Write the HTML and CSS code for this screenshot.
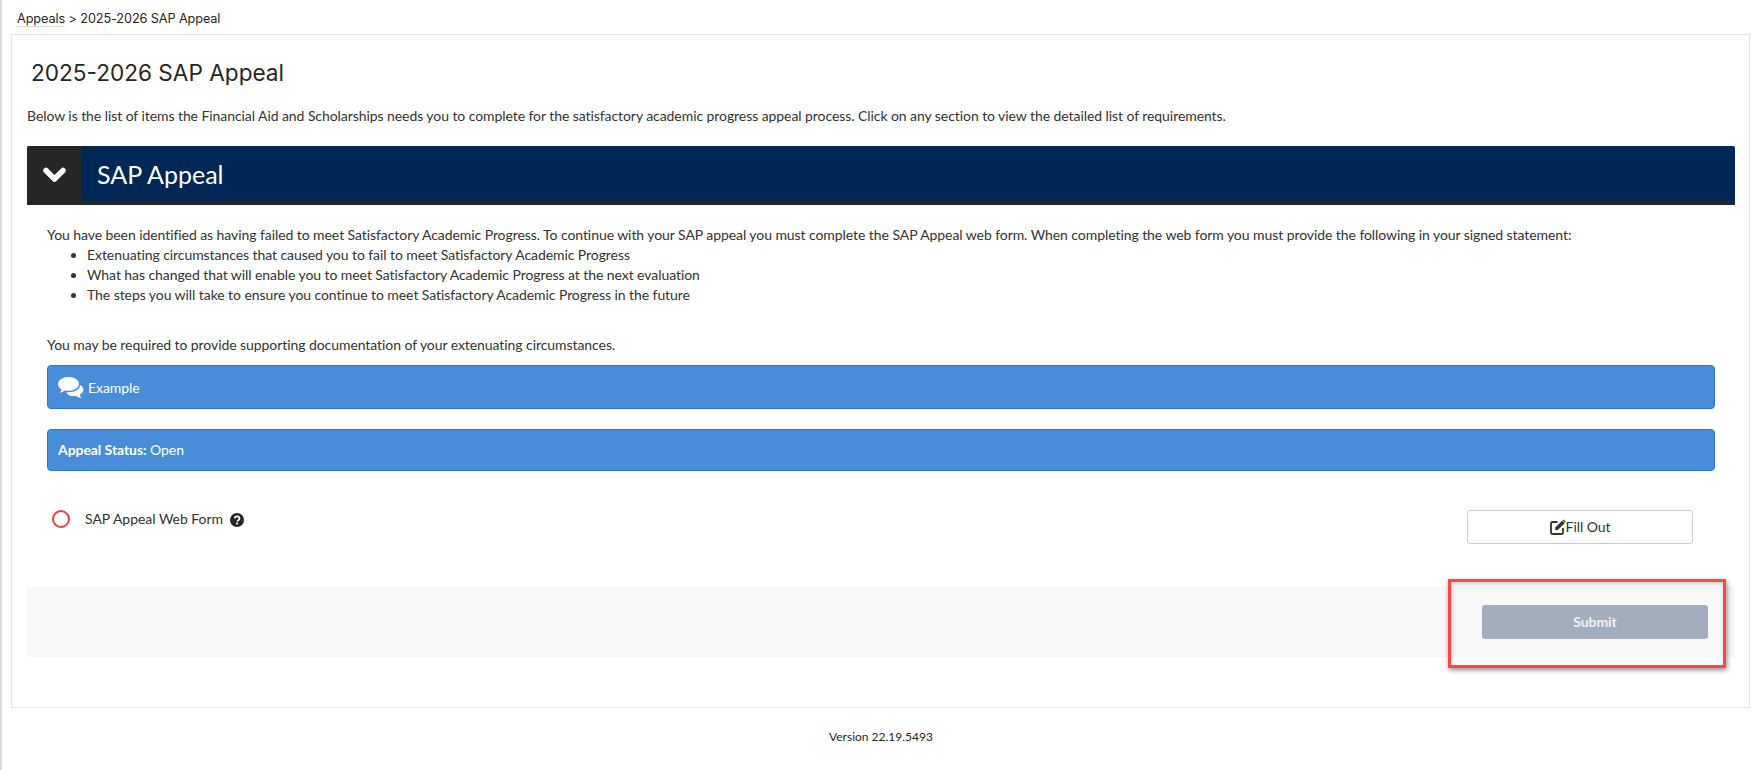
FILE: index.html
```html
<!DOCTYPE html>
<html lang="en">
<head>
<meta charset="utf-8">
<title>2025-2026 SAP Appeal</title>
<link rel="stylesheet" href="styles.css">
</head>
<body>
<nav class="crumbs"><a class="crumb-link" href="#">Appeals</a> &gt; 2025-2026 SAP Appeal</nav>
<main class="panel">
  <h1 class="title">2025-2026 SAP Appeal</h1>
  <p class="intro">Below is the list of items the Financial Aid and Scholarships needs you to complete for the satisfactory academic progress appeal process. Click on any section to view the detailed list of requirements.</p>
  <section class="section">
    <header class="section-head">
      <span class="toggle">
        <svg class="chevron" viewBox="0 0 23 16" width="23" height="16" aria-hidden="true"><path d="M3 3.500 L11.500 12 L20 3.500" fill="none" stroke="#fff" stroke-width="5.500" stroke-linecap="round" stroke-linejoin="round"/></svg>
      </span>
      <h2 class="section-title">SAP Appeal</h2>
    </header>
    <div class="section-body">
      <p class="lead">You have been identified as having failed to meet Satisfactory Academic Progress. To continue with your SAP appeal you must complete the SAP Appeal web form. When completing the web form you must provide the following in your signed statement:</p>
      <ul class="reasons">
        <li>Extenuating circumstances that caused you to fail to meet Satisfactory Academic Progress</li>
        <li>What has changed that will enable you to meet Satisfactory Academic Progress at the next evaluation</li>
        <li>The steps you will take to ensure you continue to meet Satisfactory Academic Progress in the future</li>
      </ul>
      <p class="note">You may be required to provide supporting documentation of your extenuating circumstances.</p>
      <div class="alert alert-example">
        <svg class="comments" viewBox="0 0 26 21" width="26" height="21" aria-hidden="true">
          <path d="M10.500 0C4.700 0 0 3.100 0 7c0 2.200 1.400 4.100 3.500 5.400C3.200 13.600 2.400 14.700 1.400 15.600c2 -.2 3.900 -1 5.300 -2.200 1.200.3 2.500.4 3.800.4 5.800 0 10.500-3 10.500-6.800S16.300 0 10.500 0z" fill="#fff"/>
          <path d="M22.300 7.800c-.2 4.300-5.200 7.400-11.600 7.500-.9 0-1.700 0-2.500-.1 1.300 2.500 4.200 4 7.400 4 .9 0 1.900-.1 2.700-.3 1.500 1.100 3.200 1.900 5.200 2.100-.9-.9-1.500-2-1.800-3.200C24 16.600 25.400 14.900 25.400 12.800c0-2-1.200-3.800-3.100-5z" fill="#fff"/>
        </svg>
        <span class="alert-text">Example</span>
      </div>
      <div class="alert alert-status"><span><strong>Appeal Status:</strong> Open</span></div>
      <div class="task">
        <span class="radio"></span>
        <span class="task-label">SAP Appeal Web Form</span>
        <svg class="help" viewBox="0 0 14 14" width="14" height="14" aria-hidden="true">
          <circle cx="7" cy="7" r="7" fill="#262626"/>
          <path d="M4.700 5.400C4.800 4.200 5.800 3.400 7.100 3.400c1.300 0 2.300.8 2.300 2 0 1-.6 1.500-1.200 1.900-.5.3-.7.6-.7 1.100" fill="none" stroke="#fff" stroke-width="1.700"/>
          <rect x="6.100" y="9.600" width="1.800" height="1.800" fill="#fff"/>
        </svg>
        <button class="btn-fill" type="button">
          <svg class="edit" viewBox="0 0 16 16" width="16" height="16" aria-hidden="true">
            <path d="M7.500 3H2.800C1.800 3 1 3.800 1 4.800v8.400c0 1 .8 1.800 1.800 1.800h8.400c1 0 1.800-.8 1.800-1.800V9" fill="none" stroke="#333" stroke-width="1.800"/>
            <path d="M5.500 8.300 12.100 1.700l2.500 2.500L8 10.800l-3 .5z" fill="#333"/>
            <path d="M12.900.9c.3-.3.800-.3 1.100 0l1.400 1.400c.3.300.3.800 0 1.100l-.4.400-2.500-2.500z" fill="#333"/>
          </svg>Fill Out
        </button>
      </div>
    </div>
    <footer class="actions">
      <button class="btn-submit" type="button" disabled>Submit</button>
    </footer>
  </section>
  <div class="callout"></div>
</main>
<footer class="version">Version 22.19.5493</footer>
</body>
</html>
```
FILE: styles.css
```css
* { box-sizing: border-box; }
html, body { margin: 0; padding: 0; }
body {
  height: 770px;
  overflow: hidden;
  background: #fff;
  border-left: 2px solid #dcdcdc;
  font-family: Lato, "Liberation Sans", sans-serif;
  font-size: 14px;
  line-height: 20px;
  letter-spacing: -0.07px;
  color: #333;
}
.crumbs {
  height: 34px;
  padding: 9px 0 0 15px;
  font-family: Inter, "Liberation Sans", sans-serif;
  font-size: 12.700px;
  line-height: 20px;
  letter-spacing: -0.1px;
  color: #262626;
}
.crumb-link {
  color: #262626;
  text-decoration: none;
  border-bottom: 1px solid #ddd;
}
.panel {
  position: relative;
  margin: 0 10px 0 9px;
  height: 674px;
  padding: 0 14px 0 15px;
  border: 1px solid #e5e5e5;
}
.title {
  margin: 0;
  padding: 24px 0 0 4px;
  font-family: Inter, "Liberation Sans", sans-serif;
  font-size: 22.600px;
  font-weight: 400;
  line-height: 28px;
  letter-spacing: 0;
  color: #262626;
}
.intro { margin: 0; padding-top: 19px; height: 59px; color: #333; }
.section { width: 100%; }
.section-head {
  display: flex;
  height: 59px;
  background: #002856;
  border-bottom: 4px solid #262626;
  border-radius: 2px 2px 0 0;
}
.toggle {
  display: flex;
  align-items: center;
  justify-content: center;
  width: 55px;
  margin-bottom: -4px;
  background: #262626;
  border-radius: 2px 0 0 0;
}
.chevron { margin-bottom: 2px; }
.section-title {
  margin: 0;
  padding-left: 15px;
  font-family: Lato, "Liberation Sans", sans-serif;
  font-size: 25px;
  font-weight: 400;
  line-height: 56px;
  letter-spacing: 0;
  color: #fff;
}
.section-body { padding: 20px 20px 0 20px; height: 382px; }
.lead, .note { margin: 0; }
.reasons { margin: 0; padding: 0 0 0 40px; }
.note { padding-top: 30px; }
.alert {
  display: flex;
  align-items: center;
  gap: 4px;
  padding: 0 10px;
  margin-top: 10px;
  background: #478dda;
  border: 1px solid #337ac6;
  border-radius: 4px;
  color: #fff;
}
.alert strong { font-weight: 700; }
.alert-text { padding-top: 1px; }
.alert-example { height: 44px; }
.alert-status { height: 42px; margin-top: 20px; }
.task {
  position: relative;
  display: flex;
  align-items: center;
  height: 34px;
  margin-top: 39px;
  padding-left: 5px;
}
.radio {
  width: 18px;
  height: 18px;
  border: 2px solid #ee3c3c;
  border-radius: 50%;
  margin-bottom: 16px;
}
.task-label { margin: 0 0 16px 15px; letter-spacing: -0.03px; }
.help { margin: 0 0 15px 7px; }
.btn-fill {
  display: flex;
  align-items: center;
  justify-content: center;
  width: 226px;
  height: 34px;
  margin-left: auto;
  margin-right: 22px;
  background: #fff;
  border: 1px solid #ccc;
  border-radius: 3px;
  font: inherit;
  letter-spacing: inherit;
  color: #333;
}
.actions {
  display: flex;
  justify-content: flex-end;
  align-items: center;
  height: 70px;
  padding-right: 27px;
  background: #f7f7f7;
}
.btn-submit {
  width: 226px;
  height: 34px;
  border: none;
  border-radius: 3px;
  background: #a2aebb;
  font: inherit;
  font-weight: 700;
  letter-spacing: inherit;
  color: #f0f2f4;
}
.callout {
  position: absolute;
  left: 1436px;
  top: 544px;
  width: 278px;
  height: 89px;
  border: 3px solid #ff4444;
  box-shadow: 1px 2px 5px rgba(0, 0, 0, 0.45), inset 1px 2px 5px rgba(0, 0, 0, 0.2);
}
.version {
  padding-top: 19px;
  text-align: center;
  font-size: 12px;
  line-height: 20px;
  letter-spacing: 0;
  color: #262626;
}
```
